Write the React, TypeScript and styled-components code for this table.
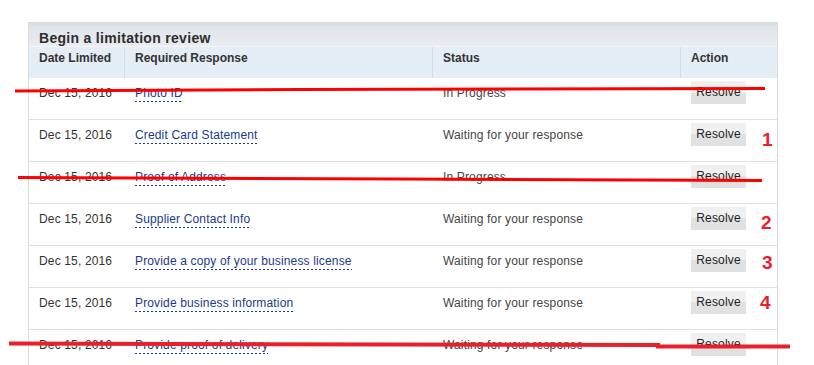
import React from "react";
import styled, { createGlobalStyle } from "styled-components";

const Global = createGlobalStyle`
  html, body { margin: 0; padding: 0; background: #fff; }
  body { font-family: "Liberation Sans", Arial, sans-serif; font-size: 12px; color: #333; }
`;

const Page = styled.div`
  position: relative;
  width: 814px;
  height: 365px;
  overflow: hidden;
  padding: 22px 0 0 28px;
  box-sizing: border-box;
`;

const Panel = styled.div`
  width: 750px;
  border-left: 1px solid #dcdcdc;
  border-right: 1px solid #dcdcdc;
  box-sizing: border-box;
`;

const TitleBar = styled.div`
  height: 25px;
  box-sizing: border-box;
  padding: 8px 0 0 10px;
  background: linear-gradient(#d4d9df 0px, #e1e5ea 5px, #e9ecf0 100%);
  border-bottom: 1px solid #f3f5f8;
  font-weight: bold;
  font-size: 14px;
  letter-spacing: 0.3px;
  line-height: 16px;
  color: #2e2e2e;
`;

const Grid = styled.div`
  display: grid;
  grid-template-columns: 95px 308px 248px 1fr;
`;

const HeaderRow = styled(Grid)`
  height: 31px;
  background: #e5edf7;
`;

const HeaderCell = styled.div<{ $divider?: boolean }>`
  padding: 4px 0 0 10px;
  border-left: ${(p) => (p.$divider ? "1px solid #d4dbe4" : "none")};
  font-weight: bold;
  font-size: 12px;
  line-height: 14px;
  color: #333;
`;

const Row = styled(Grid)`
  position: relative;
  height: 42px;
  box-sizing: border-box;
  border-bottom: 1px solid #e0e0e0;
`;

const Cell = styled.div<{ $divider?: boolean; $tone?: string }>`
  padding: 8px 0 0 ${(p) => (p.$divider ? 11 : 10)}px;
  font-size: 12px;
  letter-spacing: 0.15px;
  line-height: 14px;
  color: ${(p) => p.$tone || "#333"};
`;

const ActionCell = styled.div`
  padding: 3px 0 0 11px;
`;

const LinkText = styled.span`
  color: #1a3a8c;
  padding-bottom: 2px;
  background-image: linear-gradient(to right, #1a3a8c 60%, transparent 60%);
  background-size: 4px 1px;
  background-repeat: repeat-x;
  background-position: 0 100%;
  cursor: pointer;
`;

const ResolveButton = styled.button`
  width: 55px;
  height: 23px;
  padding: 0;
  border: none;
  background: linear-gradient(#f0f0f0 0%, #f0f0f0 50%, #e1e1e1 50%, #e1e1e1 100%);
  font-family: "Liberation Sans", Arial, sans-serif;
  font-size: 12px;
  letter-spacing: 0.15px;
  line-height: 23px;
  color: #1e1e1e;
  cursor: pointer;
`;

const Note = styled.span<{ $top: number; $left: number }>`
  position: absolute;
  top: ${(p) => p.$top}px;
  left: ${(p) => p.$left}px;
  font-family: "Liberation Sans", Arial, sans-serif;
  font-weight: bold;
  font-size: 19px;
  line-height: 19px;
  color: #e8212b;
`;

const Strikes = styled.svg`
  position: absolute;
  top: 0;
  left: 0;
  pointer-events: none;
`;

type Item = {
  response: string;
  status: string;
  note?: { n: string; top: number; left: number };
};

const items: Item[] = [
  { response: "Photo ID", status: "In Progress" },
  { response: "Credit Card Statement", status: "Waiting for your response", note: { n: "1", top: 10, left: 733 } },
  { response: "Proof of Address", status: "In Progress" },
  { response: "Supplier Contact Info", status: "Waiting for your response", note: { n: "2", top: 9, left: 732 } },
  { response: "Provide a copy of your business license", status: "Waiting for your response", note: { n: "3", top: 7, left: 733 } },
  { response: "Provide business information", status: "Waiting for your response", note: { n: "4", top: 5, left: 731 } },
  { response: "Provide proof of delivery", status: "Waiting for your response" },
];

export default function App() {
  return (
    <>
      <Global />
      <Page>
        <Panel>
          <TitleBar>Begin a limitation review</TitleBar>
          <HeaderRow>
            <HeaderCell>Date Limited</HeaderCell>
            <HeaderCell $divider>Required Response</HeaderCell>
            <HeaderCell $divider>Status</HeaderCell>
            <HeaderCell $divider>Action</HeaderCell>
          </HeaderRow>
          {items.map((it, i) => (
            <Row key={i}>
              <Cell>Dec 15, 2016</Cell>
              <Cell $divider>
                <LinkText>{it.response}</LinkText>
              </Cell>
              <Cell $divider $tone="#444">{it.status}</Cell>
              <ActionCell>
                <ResolveButton>Resolve</ResolveButton>
              </ActionCell>
              {it.note && (
                <Note $top={it.note.top} $left={it.note.left}>
                  {it.note.n}
                </Note>
              )}
            </Row>
          ))}
        </Panel>
        <Strikes width="814" height="365" viewBox="0 0 814 365">
          <polyline points="15,91 300,89.5 765,88.5" fill="none" stroke="#ff0000" strokeWidth="3" />
          <polyline points="18,177.5 400,179 762,180.5" fill="none" stroke="#ff0000" strokeWidth="3" />
          <polyline points="9,343.5 400,344.5 658,345 658,346.5 790,346.5" fill="none" stroke="#e8202a" strokeWidth="4" />
        </Strikes>
      </Page>
    </>
  );
}
